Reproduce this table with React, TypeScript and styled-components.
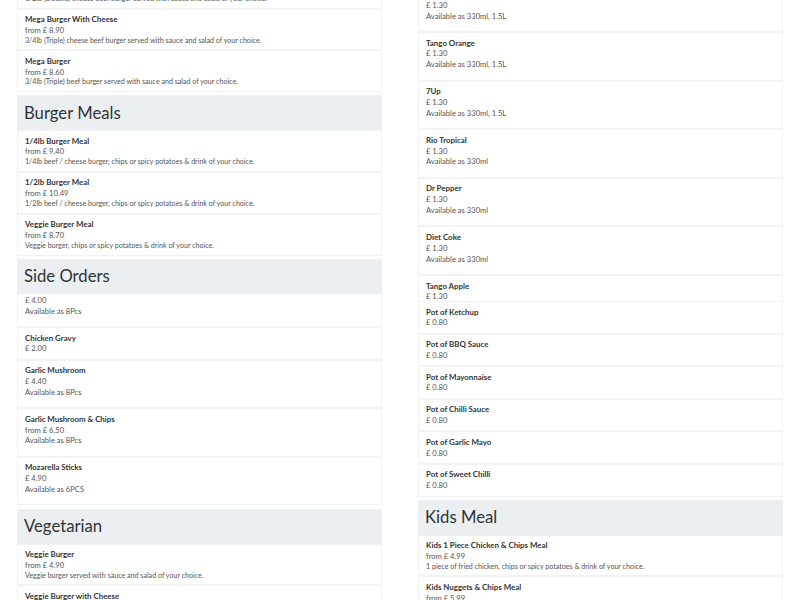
import { useLayoutEffect, useRef, type ReactNode } from 'react'
import styled, { createGlobalStyle } from 'styled-components'

type MenuItem = {
  name: string
  price: string
  desc?: string
  avail?: string
  anchor?: boolean
}

type MenuSection = {
  title?: string
  items: MenuItem[]
  maxHeight?: number
  scrollToEnd?: boolean
  extra?: MenuItem[]
}

const GlobalStyle = createGlobalStyle`
  html, body {
    margin: 0;
    padding: 0;
    background: #ffffff;
    overflow: hidden;
  }

  body {
    font-family: Lato, 'Open Sans', sans-serif;
    color: #333333;
  }
`

const Page = styled.div`
  display: grid;
  grid-template-columns: 1fr 1fr;
  column-gap: 36px;
  padding: 0 17px;
  height: 100vh;
`

const Column = styled.div`
  height: 100vh;
  overflow: hidden;
`

const Section = styled.section`
  & + & {
    margin-top: 3px;
  }
`

const SectionTitle = styled.h2`
  margin: 0;
  height: 35px;
  padding: 0 7px;
  display: flex;
  align-items: center;
  background-color: #eceff1;
  font-size: 16.7px;
  font-weight: 400;
  color: #2f3437;
`

const List = styled.div<{ $maxHeight?: number }>`
  max-height: ${(p) => (p.$maxHeight ? `${p.$maxHeight}px` : 'none')};
  overflow: hidden;
`

const Item = styled.div`
  border: 1px solid #f1f2f3;
  padding: 4.5px 7px;
  line-height: 10.8px;
  background-color: #ffffff;
`

const Name = styled.div`
  font-size: 7.9px;
  font-weight: 700;
  color: #333333;
`

const Price = styled.div`
  font-size: 7.6px;
  color: #555555;
`

const Desc = styled.div`
  font-size: 7.1px;
  line-height: 9.2px;
  color: #555555;
`

const Avail = styled.div`
  font-size: 7.6px;
  color: #555555;
  margin-bottom: 5.2px;
`

const leftSections: MenuSection[] = [
  {
    title: 'Burgers',
    items: [
      { name: '1/4lb Burger', price: 'from £ 3.50', desc: '1/4lb beef burger served with sauce and salad of your choice.' },
      { name: '1/2lb Burger With Cheese', price: 'from £ 6.20', desc: '1/2lb (Double) cheese beef burger served with sauce and salad of your choice.' },
      { name: 'Mega Burger With Cheese', price: 'from £ 8.90', desc: '3/4lb (Triple) cheese beef burger served with sauce and salad of your choice.', anchor: true },
      { name: 'Mega Burger', price: 'from £ 8.60', desc: '3/4lb (Triple) beef burger served with sauce and salad of your choice.' },
    ],
  },
  {
    title: 'Burger Meals',
    items: [
      { name: '1/4lb Burger Meal', price: 'from £ 9.40', desc: '1/4lb beef / cheese burger, chips or spicy potatoes & drink of your choice.' },
      { name: '1/2lb Burger Meal', price: 'from £ 10.49', desc: '1/2lb beef / cheese burger, chips or spicy potatoes & drink of your choice.' },
      { name: 'Veggie Burger Meal', price: 'from £ 8.70', desc: 'Veggie burger, chips or spicy potatoes & drink of your choice.' },
    ],
  },
  {
    title: 'Side Orders',
    maxHeight: 212,
    scrollToEnd: true,
    items: [
      { name: 'Chicken Nuggets', price: '£ 4.00', avail: 'Available as 8Pcs' },
      { name: 'Chicken Gravy', price: '£ 2.00' },
      { name: 'Garlic Mushroom', price: '£ 4.40', avail: 'Available as 8Pcs' },
      { name: 'Garlic Mushroom & Chips', price: 'from £ 6.50', avail: 'Available as 8Pcs' },
      { name: 'Mozarella Sticks', price: '£ 4.90', avail: 'Available as 6PCS' },
    ],
  },
  {
    title: 'Vegetarian',
    items: [
      { name: 'Veggie Burger', price: 'from £ 4.90', desc: 'Veggie burger served with sauce and salad of your choice.' },
      { name: 'Veggie Burger with Cheese', price: 'from £ 5.40', desc: 'Veggie burger with cheese served with sauce and salad of your choice.' },
    ],
  },
]

const rightSections: MenuSection[] = [
  {
    title: 'Drinks',
    maxHeight: 366,
    items: [
      { name: 'Coca Cola', price: '£ 1.30', avail: 'Available as 330ml, 1.5L' },
      { name: 'Pepsi', price: '£ 1.30', avail: 'Available as 330ml, 1.5L' },
      { name: 'Tango Orange', price: '£ 1.30', avail: 'Available as 330ml, 1.5L', anchor: true },
      { name: '7Up', price: '£ 1.30', avail: 'Available as 330ml, 1.5L' },
      { name: 'Rio Tropical', price: '£ 1.30', avail: 'Available as 330ml' },
      { name: 'Dr Pepper', price: '£ 1.30', avail: 'Available as 330ml' },
      { name: 'Diet Coke', price: '£ 1.30', avail: 'Available as 330ml' },
      { name: 'Tango Apple', price: '£ 1.30', avail: 'Available as 330ml' },
      { name: 'Water', price: '£ 1.00', avail: 'Available as 500ml' },
    ],
    extra: [
      { name: 'Pot of Ketchup', price: '£ 0.80' },
      { name: 'Pot of BBQ Sauce', price: '£ 0.80' },
      { name: 'Pot of Mayonnaise', price: '£ 0.80' },
      { name: 'Pot of Chilli Sauce', price: '£ 0.80' },
      { name: 'Pot of Garlic Mayo', price: '£ 0.80' },
      { name: 'Pot of Sweet Chilli', price: '£ 0.80' },
    ],
  },
  {
    title: 'Kids Meal',
    items: [
      { name: 'Kids 1 Piece Chicken & Chips Meal', price: 'from £ 4.99', desc: '1 piece of fried chicken, chips or spicy potatoes & drink of your choice.' },
      { name: 'Kids Nuggets & Chips Meal', price: 'from £ 5.99', desc: '4 chicken nuggets, chips or spicy potatoes & drink of your choice.' },
      { name: 'Kids Burger & Chips Meal', price: 'from £ 4.99', desc: 'Kids burger, chips or spicy potatoes & drink of your choice.' },
    ],
  },
]

const MenuRow = ({ item }: { item: MenuItem }) => (
  <Item data-anchor={item.anchor ? 'true' : undefined}>
    <Name>{item.name}</Name>
    <Price>{item.price}</Price>
    {item.desc && <Desc>{item.desc}</Desc>}
    {item.avail && <Avail>{item.avail}</Avail>}
  </Item>
)

const ItemList = ({ section }: { section: MenuSection }) => {
  const ref = useRef<HTMLDivElement>(null)

  useLayoutEffect(() => {
    if (section.scrollToEnd && ref.current) {
      ref.current.scrollTop = ref.current.scrollHeight
    }
  }, [section.scrollToEnd])

  return (
    <List ref={ref} $maxHeight={section.maxHeight}>
      {section.items.map((item) => (
        <MenuRow item={item} key={item.name} />
      ))}
    </List>
  )
}

// each column scrolls on its own; anchorTop is where the marked item sits
const MenuColumn = ({ anchorTop, children }: { anchorTop: number; children: ReactNode }) => {
  const ref = useRef<HTMLDivElement>(null)

  useLayoutEffect(() => {
    const col = ref.current
    const anchor = col?.querySelector('[data-anchor]')
    if (!col || !anchor) return
    col.scrollTop =
      anchor.getBoundingClientRect().top - col.getBoundingClientRect().top - anchorTop
  }, [anchorTop])

  return <Column ref={ref}>{children}</Column>
}

const renderSections = (sections: MenuSection[]) =>
  sections.map((section) => (
    <Section key={section.title}>
      {section.title && <SectionTitle>{section.title}</SectionTitle>}
      <ItemList section={section} />
      {section.extra?.map((item) => (
        <MenuRow item={item} key={item.name} />
      ))}
    </Section>
  ))

const App = () => (
  <>
    <GlobalStyle />
    <Page>
      <MenuColumn anchorTop={9}>{renderSections(leftSections)}</MenuColumn>
      <MenuColumn anchorTop={32}>{renderSections(rightSections)}</MenuColumn>
    </Page>
  </>
)

export default App
